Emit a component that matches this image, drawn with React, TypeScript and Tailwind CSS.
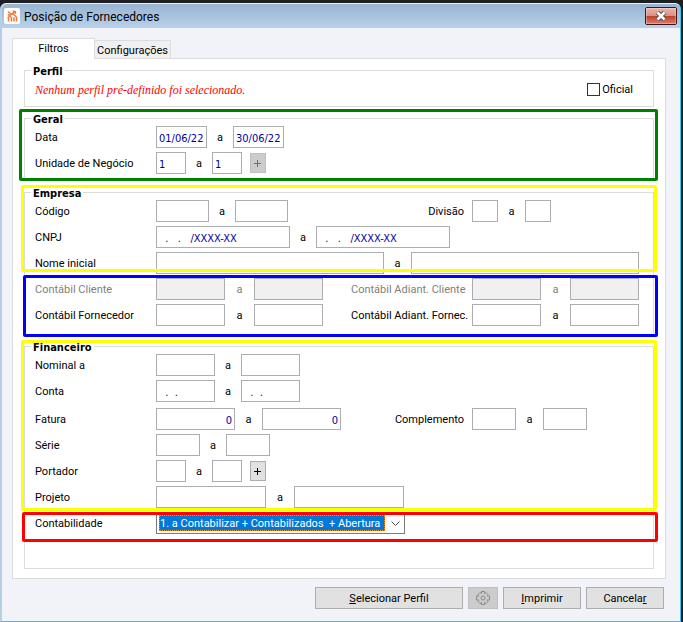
import React, { useState } from 'react';

interface RangeProps {
  id: string;
  label: string;
  width: string;
  gap?: string;
  from?: string;
  to?: string;
  align?: string;
  disabled?: boolean;
}

// "from" and "to" boxes with the connecting "a" between them
function Range({ id, label, width, gap = 'w-[26px]', from = '', to = '', align = '', disabled = false }: RangeProps) {
  const box = `h-[22px] border border-[#abadb3] bg-white px-[2px] pt-[2px] font-['DejaVu_Sans_Condensed','DejaVu_Sans',sans-serif] text-[#0000a0] outline-none focus:border-[#0078d7] disabled:bg-[#f0f0f0] [font-stretch:condensed] ${width} ${align}`;
  return (
    <>
      <input id={id} type="text" defaultValue={from} disabled={disabled} className={box} />
      <span className={`shrink-0 pt-[2px] text-center ${gap}`}>a</span>
      <input id={`${id}-ate`} type="text" aria-label={`${label} até`} defaultValue={to} disabled={disabled} className={box} />
    </>
  );
}

function Row({ id, label, disabled = false, children }: { id: string; label: string; disabled?: boolean; children: React.ReactNode }) {
  return (
    <div className={`flex h-[22px] items-center ${disabled ? 'text-[#808080]' : ''}`}>
      <label htmlFor={id} className="w-[121px] shrink-0 pt-[2px]">{label}</label>
      {children}
    </div>
  );
}

function SideField({ id, label, align = '', children }: { id: string; label: string; align?: string; children: React.ReactNode }) {
  return (
    <div className="ml-auto flex items-center">
      <label htmlFor={id} className={`w-[121px] whitespace-nowrap pt-[2px] ${align}`}>{label}</label>
      <div className="flex w-[167px] items-center">{children}</div>
    </div>
  );
}

function Group({ title, className = '', children }: { title: string; className?: string; children: React.ReactNode }) {
  return (
    <fieldset className={`min-w-0 border border-[#dcdcdc] pl-[10px] pr-[14px] ${className}`}>
      <legend className="-ml-1 h-[13px] px-[2px] font-['DejaVu_Sans_Condensed','DejaVu_Sans',sans-serif] font-bold leading-4 [font-stretch:condensed]">{title}</legend>
      {children}
    </fieldset>
  );
}

function PlusButton({ label, disabled = false }: { label: string; disabled?: boolean }) {
  return (
    <button
      type="button"
      aria-label={label}
      disabled={disabled}
      className="ml-2 flex h-5 w-4 items-center justify-center border border-[#adadad] bg-[#e1e1e1] text-black disabled:border-[#bfbfbf] disabled:bg-[#cccccc] disabled:text-[#707070]"
    >
      <svg viewBox="0 0 8 8" className="h-2 w-2" shapeRendering="crispEdges">
        <path d="M3 1h1v7H3zM0 4h7v1H0z" fill="currentColor" />
      </svg>
    </button>
  );
}

function AppIcon() {
  return (
    <svg viewBox="0 0 16 16" className="h-4 w-4 rounded-[2px] bg-white">
      <g fill="none" stroke="#f07838" strokeWidth="1.5">
        <path d="M4 3.500l3 2.500M12 3.500L4.500 8M9 2.500l3 3M4 6l3 3M9 6l3.500 3" />
        <path d="M3.500 10l2-1.500M4.500 13.500V10M7.500 13.500V9M10 13.500V9.500M12.500 13.500V9" />
      </g>
    </svg>
  );
}

function GearIcon() {
  return (
    <svg viewBox="0 0 14 14" className="h-[14px] w-[14px]" fill="none" stroke="#8b8b8b">
      <path d="M5.500 2.500V.5h3v2l1.500-1 2 2-1 1.500h2.500v4H11l1 1.500-2 2-1.500-1v2h-3v-2l-1.500 1-2-2L3 9H.5V5H3L2 3.500l2-2z" strokeLinejoin="round" />
      <circle cx="7" cy="7" r="2" />
    </svg>
  );
}

const pushButton = 'h-[22px] border border-[#adadad] bg-[#e1e1e1] pt-px hover:bg-[#e5f1fb]';

export default function App() {
  const [tab, setTab] = useState('filtros');
  const [oficial, setOficial] = useState(false);

  return (
    <div className="flex min-h-screen flex-col bg-[#1d1f23] pr-[2px] pt-[3px] font-['Roboto',sans-serif] text-[11px] leading-[14px] text-black">
      <div className="flex flex-1 flex-col rounded-t-[6px] border-b border-l-2 border-r border-t border-b-[#41bfdc] border-l-[#b5cfe7] border-r-[#41c8e6] border-t-[#e4eef8] bg-[#f2f3f9]">
        <header className="flex h-6 items-center rounded-t-[5px] bg-linear-to-b from-[#98b4d2] to-[#b9d1ea] pl-[2px] pr-[3px]">
          <AppIcon />
          <h1 className="ml-1 pt-[2px] text-[12px] leading-4">Posição de Fornecedores</h1>
          <button
            type="button"
            aria-label="Fechar"
            className="ml-auto h-[18px] w-8 overflow-hidden rounded-[2px] border border-[#43131c]"
          >
            <span className="flex h-4 items-center justify-center bg-[linear-gradient(to_bottom,#ecb4aa_0%,#dc9083_48%,#b9402a_50%,#d9806c_100%)] shadow-[inset_0_0_0_1px_rgba(255,255,255,0.3)]">
              <svg viewBox="0 0 12 10" className="h-[10px] w-3">
                <path d="M2.500 1.500l7 7M9.500 1.500l-7 7" stroke="#4b4d5a" strokeWidth="4.500" />
                <path d="M2.500 1.500l7 7M9.500 1.500l-7 7" stroke="#fff" strokeWidth="2.500" />
              </svg>
            </span>
          </button>
        </header>

        <main className="flex flex-1 flex-col pl-[10px] pr-[14px] pt-[10px]">
          <div role="tablist" className="flex items-end">
            <button
              type="button"
              role="tab"
              aria-selected={tab === 'filtros'}
              onClick={() => setTab('filtros')}
              className="relative -mb-px h-[21px] w-[83px] border border-b-0 border-[#dcdcdc] bg-white"
            >
              Filtros
            </button>
            <button
              type="button"
              role="tab"
              aria-selected={tab === 'config'}
              onClick={() => setTab('config')}
              className="h-[18px] w-[76px] border border-b-0 border-l-0 border-[#dcdcdc] bg-[#f0f0f0] pt-[2px]"
            >
              Configurações
            </button>
          </div>

          <div role="tabpanel" className="border border-[#dcdcdc] bg-white px-[11px] pb-[9px] pt-[5px]">
            <Group title="Perfil">
              <div className="flex h-[29px] items-center justify-between pb-[5px]">
                <p className="pt-[2px] font-['Liberation_Serif',serif] text-[12px] italic text-[#ff0000]">Nenhum perfil pré-definido foi selecionado.</p>
                <label className="mr-[6px] flex items-center gap-[2px]">
                  <input
                    type="checkbox"
                    checked={oficial}
                    onChange={(e) => setOficial(e.target.checked)}
                    className="h-[13px] w-[13px] appearance-none border border-[#333333] bg-white checked:bg-[#0078d7]"
                  />
                  <span className="pt-[2px]">Oficial</span>
                </label>
              </div>
            </Group>

            <div className="relative mt-[5px]">
              <Group title="Geral" className="pb-[5px] pt-px">
                <div className="space-y-1">
                  <Row id="data" label="Data">
                    <Range id="data" label="Data" width="w-[51px]" from="01/06/22" to="30/06/22" />
                  </Row>
                  <Row id="unidade" label="Unidade de Negócio">
                    <Range id="unidade" label="Unidade de Negócio" width="w-[30px]" from="1" to="1" />
                    <PlusButton label="Mais unidades" disabled />
                  </Row>
                </div>
              </Group>
              <div className="pointer-events-none absolute -bottom-px -left-[5px] -right-1 -top-[3px] rounded-[2px] border-[3px] border-[#008000]" />
            </div>

            <div className="relative mt-[6px]">
              <Group title="Empresa" className="pb-[9px] pt-px">
                <div className="space-y-1">
                  <Row id="codigo" label="Código">
                    <Range id="codigo" label="Código" width="w-[53px]" />
                    <SideField id="divisao" label="Divisão" align="pr-2 text-right">
                      <Range id="divisao" label="Divisão" width="w-[26px]" gap="w-[27px]" />
                    </SideField>
                  </Row>
                  <Row id="cnpj" label="CNPJ">
                    <Range id="cnpj" label="CNPJ" width="w-[134px]" from="  .   .   /XXXX-XX" to="  .   .   /XXXX-XX" />
                  </Row>
                  <Row id="nome" label="Nome inicial">
                    <Range id="nome" label="Nome inicial" width="min-w-0 flex-1" gap="w-[27px]" />
                  </Row>
                  <Row id="cliente" label="Contábil Cliente" disabled>
                    <Range id="cliente" label="Contábil Cliente" width="w-[69px]" gap="w-[29px]" disabled />
                    <SideField id="adiant-cliente" label="Contábil Adiant. Cliente">
                      <Range id="adiant-cliente" label="Contábil Adiant. Cliente" width="w-[69px]" gap="w-[29px]" disabled />
                    </SideField>
                  </Row>
                  <Row id="fornecedor" label="Contábil Fornecedor">
                    <Range id="fornecedor" label="Contábil Fornecedor" width="w-[69px]" gap="w-[29px]" />
                    <SideField id="adiant-fornec" label="Contábil Adiant. Fornec.">
                      <Range id="adiant-fornec" label="Contábil Adiant. Fornec." width="w-[69px]" gap="w-[29px]" />
                    </SideField>
                  </Row>
                </div>
              </Group>
              <div className="pointer-events-none absolute -left-[3px] -right-[3px] -top-px bottom-16 rounded-[2px] border-[3px] border-[#ffff00]" />
              <div className="pointer-events-none absolute -bottom-px -left-px -right-1 top-[89px] rounded-[2px] border-[3px] border-[#0000ff]" />
            </div>

            <div className="relative mt-1">
              <Group title="Financeiro" className="pb-[34px] pt-px">
                <div className="space-y-1">
                  <Row id="nominal" label="Nominal a">
                    <Range id="nominal" label="Nominal" width="w-[59px]" />
                  </Row>
                  <Row id="conta" label="Conta">
                    <Range id="conta" label="Conta" width="w-[59px]" from="  .  ." to="  .  ." />
                  </Row>
                </div>
                <div className="mt-[6px] space-y-1">
                  <Row id="fatura" label="Fatura">
                    <Range id="fatura" label="Fatura" width="w-[79px]" gap="w-[27px]" from="0" to="0" align="text-right" />
                    <SideField id="complemento" label="Complemento" align="pr-2 text-right">
                      <Range id="complemento" label="Complemento" width="w-[44px]" gap="w-[27px]" />
                    </SideField>
                  </Row>
                  <Row id="serie" label="Série">
                    <Range id="serie" label="Série" width="w-[44px]" />
                  </Row>
                  <Row id="portador" label="Portador">
                    <Range id="portador" label="Portador" width="w-[30px]" />
                    <PlusButton label="Mais portadores" />
                  </Row>
                  <Row id="projeto" label="Projeto">
                    <Range id="projeto" label="Projeto" width="w-[110px]" gap="w-[28px]" />
                  </Row>
                  <Row id="contabilidade" label="Contabilidade">
                    <div className="relative w-[249px] border border-[#7a7a7a] bg-white p-[2px]">
                      <select
                        id="contabilidade"
                        className="block h-4 w-[226px] appearance-none border border-dotted border-[#ff8728] bg-[#0078d7] pt-px text-white outline-none"
                      >
                        <option>1. a Contabilizar + Contabilizados&nbsp; + Abertura</option>
                      </select>
                      <svg viewBox="0 0 9 6" className="pointer-events-none absolute right-1 top-2 h-[6px] w-[9px]" fill="none" stroke="#505050">
                        <path d="M.5.5l4 4 4-4" />
                      </svg>
                    </div>
                  </Row>
                </div>
              </Group>
              <div className="pointer-events-none absolute -left-[3px] -right-[3px] bottom-[58px] top-0 rounded-[2px] border-[3px] border-[#ffff00]" />
              <div className="pointer-events-none absolute -left-[2px] -right-1 bottom-[27px] top-[172px] rounded-[2px] border-[3px] border-[#ff0000]" />
            </div>
          </div>

          <footer className="flex justify-end gap-[5px] pb-3 pr-[2px] pt-2">
            <button type="button" className={`${pushButton} w-[148px]`}><u>S</u>elecionar Perfil</button>
            <button type="button" aria-label="Opções" disabled className="flex h-[22px] w-[30px] items-center justify-center border border-[#bfbfbf] bg-[#cccccc]">
              <GearIcon />
            </button>
            <button type="button" className={`${pushButton} w-[78px]`}><u>I</u>mprimir</button>
            <button type="button" className={`${pushButton} w-[78px]`}>Cancela<u>r</u></button>
          </footer>
        </main>
      </div>
    </div>
  );
}
